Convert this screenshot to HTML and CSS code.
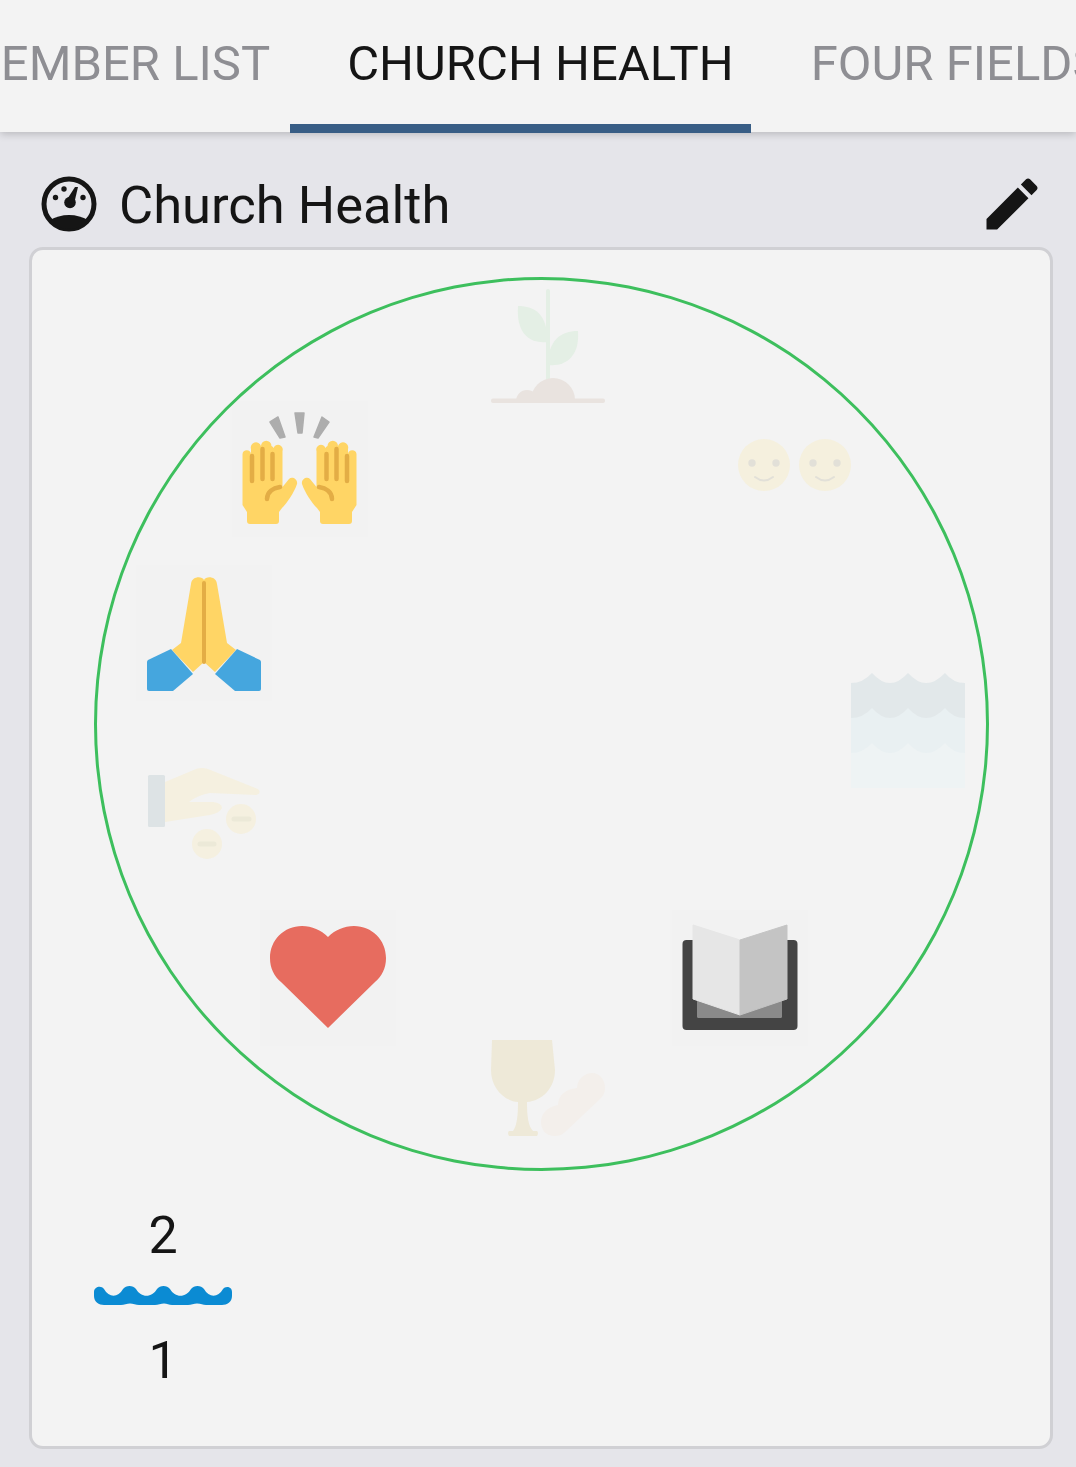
FILE: index.html
```html
<!DOCTYPE html>
<html lang="en">
<head>
<meta charset="utf-8">
<title>Church Health</title>
<link rel="stylesheet" href="styles.css">
</head>
<body>
<nav class="tabbar">
  <div class="tabs">
    <span class="tab tab-member">MEMBER LIST</span>
    <span class="tab tab-active">CHURCH HEALTH</span>
    <span class="tab tab-four">FOUR FIELDS</span>
  </div>
  <span class="indicator"></span>
</nav>
<main class="content">
  <header class="title-row">
    <svg class="gauge" viewBox="0 0 56 56">
      <circle cx="28" cy="28" r="25" fill="none" stroke="#151515" stroke-width="5"/>
      <path d="M9 44C14 41 21 39 28 39C35 39 42 41 47 44C42 50 35 53 28 53C21 53 14 50 9 44Z" fill="#151515"/>
      <circle cx="29" cy="26.500" r="5.800" fill="#151515"/>
      <path d="M25 25L34 11H37L33 28Z" fill="#151515"/>
      <circle cx="23" cy="13" r="2.700" fill="#151515"/>
      <circle cx="14.500" cy="21.500" r="2.700" fill="#151515"/>
      <circle cx="42" cy="21.500" r="2.700" fill="#151515"/>
    </svg>
    <h1 class="title">Church Health</h1>
    <svg class="pencil" viewBox="0 0 24 24"><path fill="#151515" d="M3 17.25V21h3.75L17.81 9.94l-3.75-3.75L3 17.25zM20.71 7.04c.39-.39.39-1.02 0-1.41l-2.34-2.34c-.39-.39-1.02-.39-1.41 0l-1.83 1.83 3.75 3.75 1.83-1.83z"/></svg>
  </header>
  <section class="card">
    <svg class="icon icon-plant" viewBox="0 0 136 136">
      <path d="M68 12V101" stroke="#e4efe5" stroke-width="4" stroke-linecap="round" fill="none"/>
      <path d="M38 27C55 27 67 35 68 63C50 65 36 55 38 27Z" fill="#e4efe5"/>
      <path d="M98 52C80 52 68 62 68 86C85 88 100 78 98 52Z" fill="#e4efe5"/>
      <circle cx="73" cy="121" r="22" fill="#e9e3df"/>
      <circle cx="47" cy="122" r="11" fill="#e9e3df"/>
      <rect x="0" y="124" width="136" height="12" fill="#f3f3f3"/>
      <rect x="11" y="119.500" width="114" height="4.500" rx="2" fill="#e9e3df"/>
    </svg>

    <svg class="icon icon-friends" viewBox="0 0 136 136">
      <circle cx="37" cy="68" r="26" fill="#f5f0de"/>
      <circle cx="98" cy="68" r="26" fill="#f5f0de"/>
      <circle cx="25" cy="66" r="3.700" fill="#e2e0d8"/>
      <circle cx="49" cy="66" r="3.700" fill="#e2e0d8"/>
      <circle cx="86" cy="66" r="3.700" fill="#e2e0d8"/>
      <circle cx="110" cy="66" r="3.700" fill="#e2e0d8"/>
      <path d="M28 80Q37 87 46 80M89 80Q98 87 107 80" fill="none" stroke="#e2e0d8" stroke-width="2" stroke-linecap="round"/>
    </svg>

    <svg class="icon icon-water" viewBox="0 0 136 136">
      <path d="M11 20Q23 20 32 10Q50 30 68 10Q86 30 105 10Q113 20 125 20V125H11Z" fill="#e2e8ea"/>
      <path d="M11 55Q23 55 32 45Q50 65 68 45Q86 65 105 45Q113 55 125 55V125H11Z" fill="#e9f0f2"/>
      <path d="M11 90Q23 90 32 80Q50 100 68 80Q86 100 105 80Q113 90 125 90V125H11Z" fill="#eef3f4"/>
    </svg>

    <svg class="icon icon-praise" viewBox="0 0 136 136">
      <rect width="136" height="136" fill="#f2f2f2"/>
      <path d="M38 21L46 16L53 36L48 37ZM63 12H72L70 32H66ZM97 21L90 16L82 36L86 37Z" fill="#adadad" stroke="#adadad" stroke-width="1.500" stroke-linejoin="round"/>
      <g>
        <path d="M10.500 53a4.300 4.300 0 0 1 8.500 0V48a5 5 0 0 1 10-3a5 5 0 0 1 10.500 0a5 5 0 0 1 2 2a4.500 4.500 0 0 1 9 3V86L57 78C60 75 66 78 65 83C62 92 55 102 50 107L47 111V120q0 3-3 3H18q-3 0-3-3V111L10.500 104Z" fill="#ffd565"/>
        <path d="M20 55V80M30.500 48V78M40.500 53V78M35 98C35 91 41 87 48 86" fill="none" stroke="#e3ad45" stroke-width="4.500" stroke-linecap="round"/>
      </g>
      <g transform="translate(135) scale(-1 1)">
        <path d="M10.500 53a4.300 4.300 0 0 1 8.500 0V48a5 5 0 0 1 10-3a5 5 0 0 1 10.500 0a5 5 0 0 1 2 2a4.500 4.500 0 0 1 9 3V86L57 78C60 75 66 78 65 83C62 92 55 102 50 107L47 111V120q0 3-3 3H18q-3 0-3-3V111L10.500 104Z" fill="#ffd565"/>
        <path d="M20 55V80M30.500 48V78M40.500 53V78M35 98C35 91 41 87 48 86" fill="none" stroke="#e3ad45" stroke-width="4.500" stroke-linecap="round"/>
      </g>
    </svg>

    <svg class="icon icon-prayer" viewBox="0 0 136 136">
      <rect width="136" height="136" fill="#f2f2f2"/>
      <path d="M68 15C66 11 56 11 55 19L45 78L36 85L57 107L68 97L79 107L100 85L91 78L81 19C80 11 70 11 68 15Z" fill="#ffd565"/>
      <path d="M68 18V97" stroke="#e3ad45" stroke-width="4" stroke-linecap="round" fill="none"/>
      <path d="M35 84L12 95Q11 96 11 97V124Q11 126 13 126H37L57 109Z" fill="#45a6de"/>
      <path d="M101 84L124 95Q125 96 125 97V124Q125 126 123 126H99L79 109Z" fill="#45a6de"/>
    </svg>

    <svg class="icon icon-giving" viewBox="0 0 136 136">
      <path d="M29 37L60 24Q66 22 72 24L122 44Q126 48 120 50L74 48Q62 50 53 57L77 57Q86 58 86 63Q84 68 74 70L29 77Z" fill="#f5f0e0"/>
      <rect x="12" y="30" width="17" height="52" rx="1.500" fill="#dde3e5"/>
      <circle cx="105" cy="74" r="15" fill="#f5f0e0"/>
      <circle cx="71" cy="99" r="15" fill="#f5f0e0"/>
      <path d="M98 74H113M64 99H78" stroke="#ece9d8" stroke-width="5" stroke-linecap="round"/>
    </svg>

    <svg class="icon icon-heart" viewBox="0 0 136 136">
      <rect width="136" height="136" fill="#f2f2f2"/>
      <path d="M68 27C75 20 84 16 94 16C112 16 126 30 126 48C126 58 122 66 115 72L68 118L21 72C14 66 10 58 10 48C10 30 24 16 42 16C52 16 61 20 68 27Z" fill="#e76c5f"/>
    </svg>

    <svg class="icon icon-book" viewBox="0 0 136 136">
      <rect width="136" height="136" fill="#f2f2f2"/>
      <rect x="10.500" y="30" width="115" height="90" rx="4" fill="#444444"/>
      <rect x="25" y="85" width="85" height="23" rx="1.500" fill="#8a8a8a"/>
      <path d="M21 15L68 30V105L21 89Z" fill="#e6e6e6" stroke="#e6e6e6" stroke-linejoin="round"/>
      <path d="M115 15L68 30V105L115 89Z" fill="#c4c4c4" stroke="#c4c4c4" stroke-linejoin="round"/>
    </svg>

    <svg class="icon icon-communion" viewBox="0 0 136 136">
      <path d="M12 20H72L75 50C75 68 62 81 47 82C47 95 48 106 53 111H57Q59 113 57 116H29Q27 113 29 111H33C37 106 38 95 38 82C24 81 11 68 11 50Z" fill="#eee9d8"/>
      <path d="M75 116C66 116 61 110 61 102C61 94 67 87 78 85C78 76 85 69 97 68C97 60 104 53 112 53C120 53 125 60 125 68C125 73 123 76 120 79L85 112C82 115 79 116 75 116Z" fill="#f3efeb"/>
    </svg>

    <div class="circle"></div>

    <div class="baptism">
      <span class="count">2</span>
      <svg class="wave" viewBox="0 0 138 19"><path d="M0 6C0 1 7-1 10 3C15 12 24 12 29 3C32-1 39-1 42 3C47 12 58 12 63 3C66-1 73-1 76 3C81 12 92 12 97 3C100-1 107-1 110 3C115 12 124 12 129 3C131 0 138 0 138 6V10C138 16 133 19 128 19H112C109 19 107 17.500 103 17.500C100 17.500 97 19 94 19H78C75 19 73 17.500 70 17.500C67 17.500 64 19 61 19H45C42 19 39 17.500 36 17.500C33 17.500 30 19 27 19H10C5 19 0 16 0 10Z" fill="#0b8bd3"/></svg>
      <span class="count count-low">1</span>
    </div>
  </section>
</main>
</body>
</html>
```
FILE: styles.css
```css
* { box-sizing: border-box; }
html, body { margin: 0; padding: 0; }
body {
  width: 1076px;
  height: 1467px;
  overflow: hidden;
  background: #e5e5ea;
  font-family: Roboto, "Liberation Sans", sans-serif;
  color: #151515;
}
.tabbar {
  position: relative;
  height: 132px;
  background: #f3f3f3;
  box-shadow: 0 2px 8px rgba(0, 0, 0, 0.2);
  z-index: 1;
}
.tabs {
  display: flex;
  height: 127px;
  align-items: center;
  margin-left: -42px;
  white-space: nowrap;
  font-size: 49px;
  color: #8e8e93;
}
.tab-member { margin-right: 77px; }
.tab-four { margin-left: 77px; }
.tab-active { color: #151515; }
.indicator {
  position: absolute;
  left: 290px;
  bottom: -1px;
  width: 461px;
  height: 9px;
  background: #385d85;
}
.content { padding: 0 23px 0 29px; }
.title-row {
  display: flex;
  align-items: center;
  height: 114px;
  padding: 32px 7px 0 12px;
}
.gauge { width: 56px; height: 56px; flex: none; margin-top: -2px; }
.title {
  margin: 0 0 0 22px;
  font-size: 52.500px;
  font-weight: 400;
  flex: 1;
}
.pencil { width: 68px; height: 68px; flex: none; margin-top: -3px; }
.card {
  position: relative;
  height: 1202px;
  margin-top: 1px;
  background: #f3f3f3;
  border: 3px solid #d0d0d4;
  border-radius: 14px;
}
.circle {
  position: absolute;
  left: 62px;
  top: 27px;
  width: 895px;
  height: 894px;
  border: 3px solid #3dbf5d;
  border-radius: 50%;
}
.icon { position: absolute; width: 136px; height: 136px; }
.icon-plant { left: 448px; top: 29px; }
.icon-friends { left: 695px; top: 147px; }
.icon-water { left: 808px; top: 413px; }
.icon-praise { left: 200px; top: 151px; }
.icon-prayer { left: 104px; top: 315px; }
.icon-giving { left: 104px; top: 495px; }
.icon-heart { left: 228px; top: 660px; }
.icon-book { left: 640px; top: 660px; }
.icon-communion { left: 448px; top: 770px; }
.baptism {
  position: absolute;
  left: 62px;
  top: 956px;
  width: 138px;
  display: flex;
  flex-direction: column;
  align-items: center;
}
.count { font-size: 52px; line-height: 60px; }
.wave { width: 138px; height: 19px; margin-top: 20px; }
.count-low { margin-top: 26px; }
```
